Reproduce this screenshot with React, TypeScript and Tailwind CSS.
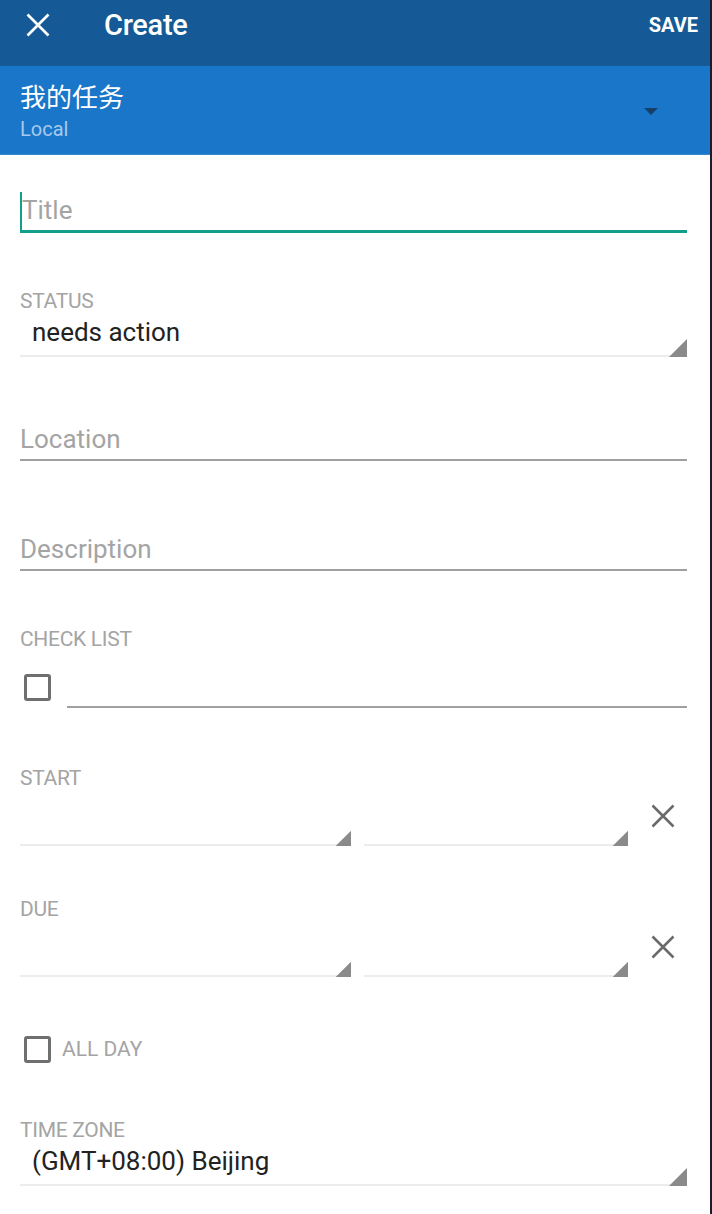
import React from "react";

const font = { fontFamily: "Roboto, 'Noto Sans CJK SC', sans-serif" };

function Tri() {
  return (
    <svg width="18" height="18" viewBox="0 0 18 18" className="block">
      <polygon points="18,0 18,18 0,18" fill="#8a8a8a" />
    </svg>
  );
}

function XIcon({ color, size, sw }: { color: string; size: number; sw: number }) {
  return (
    <svg width={size} height={size} viewBox="0 0 24 24" className="block">
      <path d="M5 5 L19 19 M19 5 L5 19" stroke={color} strokeWidth={sw} strokeLinecap="butt" />
    </svg>
  );
}

function Box() {
  return <div className="w-[27px] h-[27px] border-[3px] border-[#6f6f6f] rounded-[3px] shrink-0" />;
}

function Label({ children }: { children: React.ReactNode }) {
  return <div className="text-[21px] leading-[24px] text-[#a4a4a4] tracking-[-0.3px]">{children}</div>;
}

function DateRow() {
  return (
    <div className="flex items-end mt-[8px]">
      <div className="w-[331px] h-[30px] border-b-2 border-[#ececec] flex justify-end items-end">
        <div className="mb-[-2px] scale-[0.85] origin-bottom-right"><Tri /></div>
      </div>
      <div className="w-[264px] ml-[13px] h-[30px] border-b-2 border-[#ececec] flex justify-end items-end">
        <div className="mb-[-2px] scale-[0.85] origin-bottom-right"><Tri /></div>
      </div>
      <div className="ml-[17px] mb-[12px]">
        <XIcon color="#6a6a6a" size={36} sw={1.7} />
      </div>
    </div>
  );
}

export default function App() {
  return (
    <div style={font} className="w-[712px] h-[1214px] bg-white border-r-2 border-[#1b1b2b] overflow-hidden">
      <div className="h-[66px] bg-[#155a96] flex items-start pt-[10px]">
        <div className="ml-[20px] mt-[-3px]"><XIcon color="#ffffff" size={36} sw={1.8} /></div>
        <div className="ml-[48px] text-white text-[29px] leading-[30px] font-medium tracking-[-0.3px]">Create</div>
        <div className="ml-auto mr-[12px] mt-[4px] text-white text-[20px] leading-[22px] font-bold">SAVE</div>
      </div>
      <div className="h-[89px] bg-[#1976c8] border-b border-[#3a8ad2] flex items-center px-[20px]">
        <div className="flex-1">
          <div className="text-white text-[26px] leading-[30px] mt-[4px]">我的任务</div>
          <div className="text-[#a6c9ee] text-[20px] leading-[24px] mt-[4px]">Local</div>
        </div>
        <div className="mr-[32px] mt-[2px] w-0 h-0 border-l-[7px] border-r-[7px] border-t-[7px] border-l-transparent border-r-transparent border-t-[#15406a]" />
      </div>

      <div className="pl-[20px] pr-[23px]">
        <div className="mt-[36px] h-[42px] border-b-[3px] border-[#139e8a] flex items-center relative">
          <div className="w-[2px] h-[38px] bg-[#139e8a]" />
          <span className="text-[26px] leading-[30px] text-[#a4a4a4] mt-[-2px]">Title</span>
        </div>

        <div className="mt-[56px]">
          <Label>STATUS</Label>
          <div className="h-[44px] border-b-2 border-[#ececec] flex items-center justify-between">
            <span className="text-[26px] leading-[30px] text-[#222222] ml-[12px] mt-[-4px]">needs action</span>
            <div className="self-end mb-[-2px]"><Tri /></div>
          </div>
        </div>

        <div className="mt-[66px] h-[38px] border-b-2 border-[#a0a0a0] flex items-center">
          <span className="text-[26px] leading-[30px] text-[#a4a4a4] mt-[-4px]">Location</span>
        </div>

        <div className="mt-[72px] h-[38px] border-b-2 border-[#a0a0a0] flex items-center">
          <span className="text-[26px] leading-[30px] text-[#a4a4a4] mt-[-4px]">Description</span>
        </div>

        <div className="mt-[56px]">
          <Label>CHECK LIST</Label>
          <div className="flex items-start mt-[23px]">
            <div className="ml-[4px]"><Box /></div>
            <div className="flex-1 ml-[16px] h-[34px] border-b-2 border-[#a0a0a0]" />
          </div>
        </div>

        <div className="mt-[58px]">
          <Label>START</Label>
          <DateRow />
        </div>

        <div className="mt-[51px]">
          <Label>DUE</Label>
          <DateRow />
        </div>

        <div className="mt-[59px] flex items-center">
          <div className="ml-[4px]"><Box /></div>
          <span className="ml-[11px] text-[21px] leading-[24px] text-[#a4a4a4] mt-[-1px]">ALL DAY</span>
        </div>

        <div className="mt-[55px]">
          <Label>TIME ZONE</Label>
          <div className="h-[44px] border-b-2 border-[#ececec] flex items-center justify-between">
            <span className="text-[26px] leading-[30px] text-[#222222] ml-[12px] mt-[-4px]">(GMT+08:00) Beijing</span>
            <div className="self-end mb-[-2px]"><Tri /></div>
          </div>
        </div>
      </div>
    </div>
  );
}
